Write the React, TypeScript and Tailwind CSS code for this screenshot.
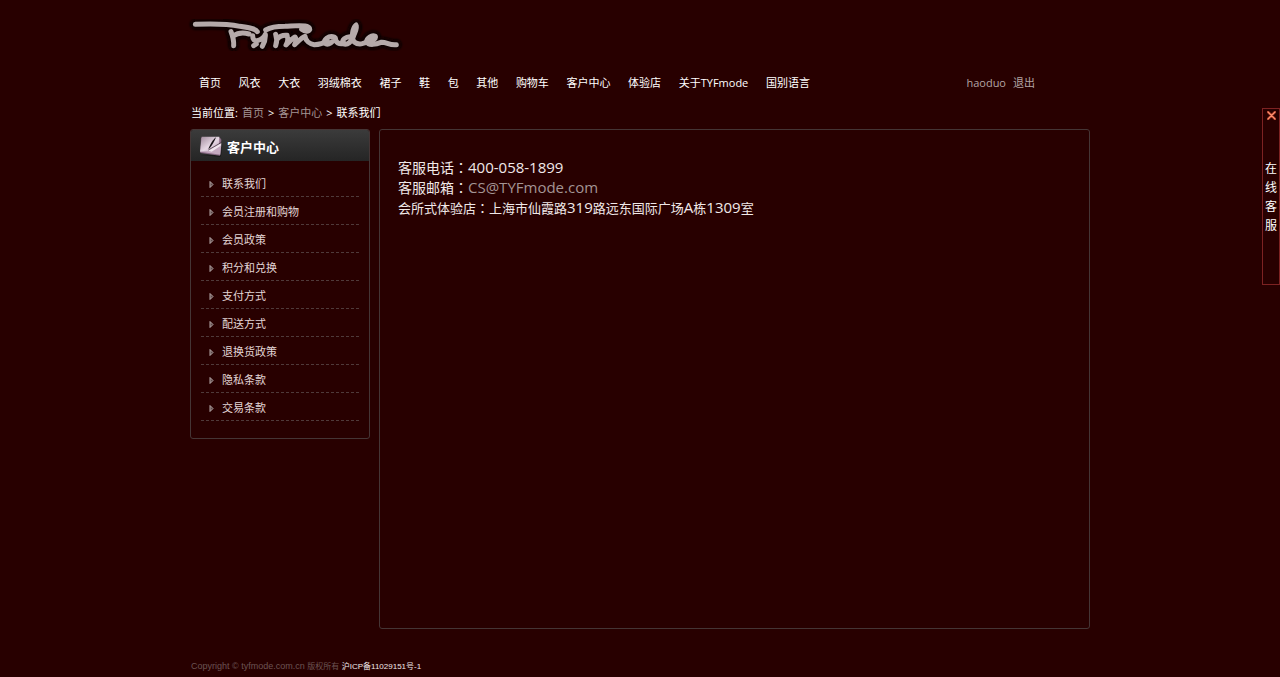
import React from "react";

const navItems = [
  "首页",
  "风衣",
  "大衣",
  "羽绒棉衣",
  "裙子",
  "鞋",
  "包",
  "其他",
  "购物车",
  "客户中心",
  "体验店",
  "关于TYFmode",
  "国别语言",
];

const sideItems = [
  "联系我们",
  "会员注册和购物",
  "会员政策",
  "积分和兑换",
  "支付方式",
  "配送方式",
  "退换货政策",
  "隐私条款",
  "交易条款",
];

const logoStrokes = [
  "M31 43 C75 41 130 42 165 49 C190 53 212 56 217 65",
  "M138 65 C143 78 147 92 146 107",
  "M144 78 C156 70 175 67 192 72",
  "M203 77 C203 88 208 94 217 92 C228 89 238 82 241 73 C242 87 238 99 232 109",
  "M206 107 L214 102",
  "M242 60 C256 52 275 49 300 49 C322 48 345 45 360 48 C376 51 378 60 368 63 C360 65 354 61 350 58",
  "M272 73 C276 84 276 96 272 107 M276 88 C284 78 296 75 306 76",
  "M306 78 C311 88 308 97 303 105 C313 95 321 86 330 81 C336 88 332 98 329 104 C341 93 350 82 360 79 C362 92 374 102 388 104 C404 104 417 99 427 92",
  "M448 81 C431 75 413 90 420 100 C430 108 446 94 451 84 C452 99 463 104 477 100",
  "M503 81 C482 76 467 92 475 101 C487 108 500 94 505 80 C510 66 518 53 513 45 C502 55 498 84 508 96 C520 106 538 102 550 93",
  "M546 94 C560 93 575 86 571 79 C560 74 545 84 545 95 C551 108 574 103 588 97 C603 95 612 106 634 104",
];

function Logo() {
  return (
    <svg
      viewBox="0 0 675 150"
      className="block h-[50px] w-[225px]"
      role="img"
      aria-label="TYFmode"
      fill="none"
      strokeLinecap="round"
      strokeLinejoin="round"
    >
      <defs>
        <filter id="logo-glow" x="-5%" y="-20%" width="110%" height="140%">
          <feGaussianBlur stdDeviation="3" />
        </filter>
      </defs>
      <g stroke="#080000" strokeWidth="32" filter="url(#logo-glow)">
        {logoStrokes.map((d) => (
          <path key={d} d={d} />
        ))}
      </g>
      <g stroke="#b5aaaa" strokeWidth="15">
        {logoStrokes.map((d) => (
          <path key={d} d={d} />
        ))}
      </g>
    </svg>
  );
}

function NotebookIcon() {
  return (
    <svg viewBox="0 0 72 66" className="h-[22px] w-6" aria-hidden="true">
      <defs>
        <linearGradient id="page" x1="0" y1="0" x2="1" y2="1">
          <stop offset="0" stopColor="#a08a9c" />
          <stop offset="0.55" stopColor="#e6d8e4" />
          <stop offset="1" stopColor="#b08eab" />
        </linearGradient>
      </defs>
      <path d="M5 60 L64 65 L71 24 L66 62 Z" fill="#111" />
      <path d="M6 8 L63 8 L67 14 L63 62 L4 54 Z" fill="#8a6a85" />
      <path d="M8 5 L61 5 L60 50 L3 50 Z" fill="url(#page)" />
      <path d="M4 50 L28 48 L67 26 L64 59 Z" fill="#c5a9c0" />
      <path d="M28 47 L67 24 L65 32 L38 50 Z" fill="#f0e5ee" />
      <path d="M51 7 C43 13 33 27 28 43 L33 38 C40 31 46 19 51 7 Z" fill="#171217" />
      <path d="M28 45 L66 23" stroke="#2b2029" strokeWidth="2" />
    </svg>
  );
}

function ArrowIcon() {
  return (
    <svg viewBox="0 0 5 7" className="h-[7px] w-[5px]" aria-hidden="true">
      <path d="M1 0.5 L4 3.5 L1 6.5 Z" fill="#5c4848" stroke="#b5a8a8" strokeWidth="1" />
    </svg>
  );
}

// Traditional Chinese glyphs keep the colon in the middle of its square
function Colon() {
  return <span className="font-['Noto_Sans_CJK_TC',sans-serif]">：</span>;
}

function OnlineService() {
  return (
    <aside className="fixed right-0 top-[108px] flex h-[177px] w-[18px] flex-col items-center border border-[#7d2222] bg-[#280000]">
      <button type="button" aria-label="关闭" className="mt-[2px] h-[9px] w-[9px]">
        <svg viewBox="0 0 9 9" className="block h-full w-full" fill="none" strokeLinecap="round">
          <path d="M1 1 L8 8 M8 1 L1 8" stroke="#8e2a18" strokeWidth="2.6" />
          <path d="M1 1 L8 8 M8 1 L1 8" stroke="#ff8f70" strokeWidth="1.3" />
        </svg>
      </button>
      <a href="#" className="mt-[39px] w-3 text-center text-[12px] leading-[19px] text-white">
        在线客服
      </a>
    </aside>
  );
}

export default function App() {
  return (
    <div className="min-h-screen bg-[#280000] font-['Open_Sans','Noto_Sans_CJK_SC',sans-serif] text-[11px] text-white">
      <div className="mx-auto w-full max-w-[900px]">
        <header className="pt-[10px]">
          <a href="#" className="-ml-[5px] block w-[225px]">
            <Logo />
          </a>
          <div className="mt-2 flex h-[30px] items-center justify-between">
            <nav className="flex w-[620px] justify-between pl-[9px]">
              {navItems.map((item) => (
                <a key={item} href="#" className="whitespace-nowrap">
                  {item}
                </a>
              ))}
            </nav>
            <div className="flex gap-[7px] pr-[55px] text-[#b3a5a5]">
              <span>haoduo</span>
              <a href="#">退出</a>
            </div>
          </div>
        </header>

        <div className="mt-[5px] flex h-5 items-center gap-1 pl-px">
          <span>当前位置:</span>
          <a href="#" className="text-[#a39494]">
            首页
          </a>
          <span>&gt;</span>
          <a href="#" className="text-[#a39494]">
            客户中心
          </a>
          <span>&gt;</span>
          <span>联系我们</span>
        </div>

        <div className="mt-[6px] flex items-start gap-[9px]">
          <section className="w-[180px] shrink-0 overflow-hidden rounded-[3px] border border-[#453535] pb-[17px]">
            <div className="flex h-[31px] items-center gap-1 bg-linear-to-b from-[#3b3b3b] to-[#252525] pl-2">
              <NotebookIcon />
              <h2 className="pt-[5px] text-[13px] font-bold">客户中心</h2>
            </div>
            <ul className="mx-[10px] mt-2">
              {sideItems.map((item) => (
                <li
                  key={item}
                  className="flex h-7 items-center gap-2 border-b border-dashed border-[#4f3a3a] pt-[3px] pl-2"
                >
                  <ArrowIcon />
                  <a href="#" className="text-[#e2d6d6]">
                    {item}
                  </a>
                </li>
              ))}
            </ul>
          </section>

          <main className="min-h-[500px] flex-1 rounded-[3px] border border-[#453535] px-[18px] pt-[27px] text-[14px] leading-5 text-[#f0e8e8]">
            <p className="flex h-5 items-baseline">
              客服电话
              <Colon />
              <span className="text-[15px]">400-058-1899</span>
            </p>
            <p className="flex h-5 items-baseline">
              客服邮箱
              <Colon />
              <a href="#" className="text-[15px] text-[#a39494]">
                CS@TYFmode.com
              </a>
            </p>
            <p className="h-5 text-[13px]">
              会所式体验店
              <Colon />
              上海市仙霞路<span className="text-[15px]">319</span>
              路远东国际广场<span className="text-[15px]">A</span>栋
              <span className="text-[15px]">1309</span>室
            </p>
          </main>
        </div>

        <footer className="mt-7 h-[18px] pl-px font-['Liberation_Sans','Noto_Sans_CJK_SC',sans-serif] text-[9px] leading-[18px] text-[#6b5353]">
          Copyright © tyfmode.com.cn <span className="text-[8px]">版权所有</span>{" "}
          <a href="#" className="text-[8px] text-[#f0e8e8]">
            沪ICP备11029151号-1
          </a>
        </footer>
      </div>
      <OnlineService />
    </div>
  );
}
